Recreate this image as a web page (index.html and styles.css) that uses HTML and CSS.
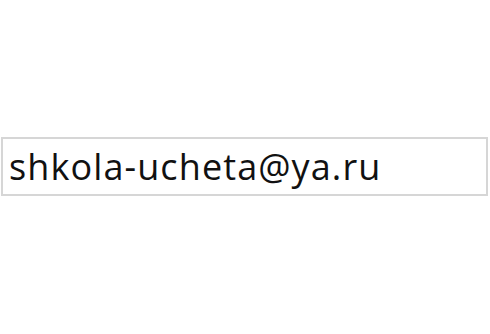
FILE: index.html
```html
<!DOCTYPE html>
<html>
<head>
<meta charset="utf-8">
<link rel="stylesheet" href="styles.css">
</head>
<body>
<div class="page">
  <div class="field">shkola-ucheta@ya.ru</div>
</div>
</body>
</html>
```
FILE: styles.css
```css
html, body {
  margin: 0;
  padding: 0;
  background: #ffffff;
}
.page {
  width: 490px;
  height: 334px;
  padding: 137px 2px 0 1px;
  box-sizing: border-box;
}
.field {
  height: 59px;
  box-sizing: border-box;
  border: 2px solid #d6d6d6;
  padding-left: 6px;
  font-family: "Open Sans", sans-serif;
  font-size: 36px;
  letter-spacing: 1.1px;
  line-height: 55px;
  color: #111111;
  white-space: nowrap;
}
```
